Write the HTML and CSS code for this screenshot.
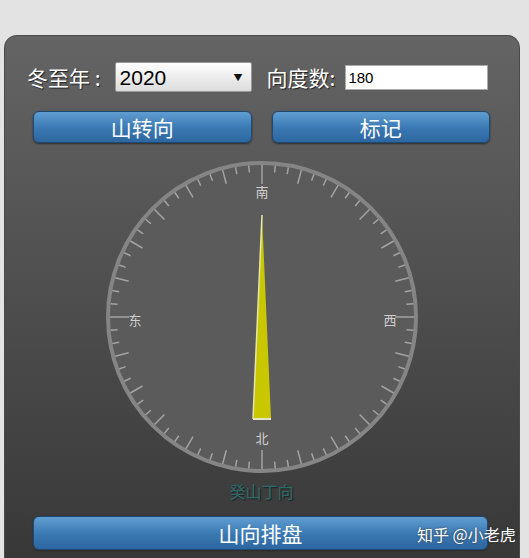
FILE: index.html
```html
<!DOCTYPE html>
<html lang="zh-CN">
<head>
  <meta charset="UTF-8" />
  <meta name="viewport" content="width=device-width, initial-scale=1.0"/>
  <title>山向排盘</title>
  <link rel="stylesheet" href="styles.css">
</head>
<body>
  <div class="panel">
    <div class="row">
      <label class="lbl" for="year">冬至年 :</label>
      <span class="select-wrap">
        <select id="year" class="year">
          <option>2020</option>
          <option>2021</option>
        </select>
      </span>
      <label class="lbl deg-lbl" for="deg">向度数:</label>
      <input type="text" id="deg" class="deg" value="180" />
    </div>

    <div class="btn-row">
      <button class="btn">山转向</button>
      <button class="btn">标记</button>
    </div>

    <div class="compass-box">
      <svg id="compass" width="320" height="320" viewBox="0 0 320 320">
        <circle cx="160" cy="160" r="154" fill="#5b5b5b" stroke="#858585" stroke-width="4"/>
        <g id="ticks" stroke="#a3a3a3" stroke-width="1.5"></g>
        <g class="dir">
          <text x="160" y="40">南</text>
          <text x="160" y="286">北</text>
          <text x="33" y="168">东</text>
          <text x="288" y="168">西</text>
        </g>
        <polygon points="160,58 151,262 169,262" fill="#c9c800"/>
        <line x1="160" y1="58" x2="151" y2="262" stroke="#e6e6a8" stroke-width="1.5"/>
        <line x1="151" y1="262" x2="169" y2="262" stroke="#e4e4c8" stroke-width="2"/>
      </svg>
    </div>

    <div class="result">癸山丁向</div>

    <div class="bottom">
      <button class="btn big">山向排盘</button>
    </div>
  </div>

  <div class="mark">知乎 @小老虎</div>

  <script>
    // draw the 72 ticks, one every 5 degrees
    const ticks = document.getElementById("ticks");
    for (let i = 0; i < 72; i++) {
      const deg = i * 5;
      let len = 7;
      if (deg % 90 === 0) len = 19;
      else if (deg % 15 === 0) len = 14;
      const a = deg * Math.PI / 180;
      const r1 = 152, r2 = 152 - len;
      const line = document.createElementNS("http://www.w3.org/2000/svg", "line");
      line.setAttribute("x1", 160 + r1 * Math.sin(a));
      line.setAttribute("y1", 160 - r1 * Math.cos(a));
      line.setAttribute("x2", 160 + r2 * Math.sin(a));
      line.setAttribute("y2", 160 - r2 * Math.cos(a));
      ticks.appendChild(line);
    }
  </script>
</body>
</html>
```

FILE: styles.css
```css
body {
  margin: 0;
  background: #e3e3e3;
  font-family: "Noto Sans CJK SC", "Noto Sans", sans-serif;
  overflow: hidden;
}

.panel {
  margin: 35px 0 0 4px;
  width: 516px;
  height: 523px;
  box-sizing: border-box;
  border: 1px solid #4a4a4a;
  border-bottom: none;
  border-radius: 13px 13px 0 0;
  background: linear-gradient(#646464, #4e4e4e 50%, #383838);
  padding: 25px 29px 0 22px;
}

.row {
  display: flex;
  align-items: center;
  height: 32px;
}

.lbl {
  color: #fff;
  font-size: 21px;
  line-height: 1;
  text-shadow: 1px 1px 1px #222;
}

.select-wrap {
  position: relative;
  margin-left: 14px;
}

.select-wrap::after {
  content: "▼";
  position: absolute;
  right: 9px;
  top: 9px;
  font-size: 9px;
  color: #111;
}

.year {
  appearance: none;
  width: 137px;
  height: 30px;
  border: 1px solid #999;
  border-radius: 2px;
  background: linear-gradient(#ffffff, #dcdcdc);
  font-family: "Liberation Sans", sans-serif;
  font-size: 21px;
  padding: 0 0 0 4px;
  color: #000;
}

.deg-lbl {
  margin-left: 15px;
}

.deg {
  width: 143px;
  height: 25px;
  box-sizing: border-box;
  margin-left: 10px;
  border: 1px solid #aaa;
  padding: 0 2px;
  font-family: "Liberation Sans", sans-serif;
  font-size: 15px;
  color: #000;
}

.btn-row {
  display: flex;
  gap: 20px;
  margin: 18px 0 0 6px;
}

.btn {
  flex: 1;
  height: 32px;
  border: 1px solid #1f4a73;
  border-radius: 6px;
  background: linear-gradient(#5f9dd1, #3a78b2 55%, #2d66a0);
  color: #fff;
  font-family: "Noto Sans CJK SC", sans-serif;
  font-size: 21px;
  line-height: 1;
  box-shadow: 0 1px 2px #2a2a2a;
  cursor: pointer;
}

.compass-box {
  display: flex;
  justify-content: center;
  margin: 14px 0 0 6px;
  height: 320px;
}

.dir text {
  fill: #cfcfcf;
  font-size: 13px;
  text-anchor: middle;
  font-family: "Noto Sans CJK SC", sans-serif;
}

.result {
  text-align: center;
  margin: 5px 0 0 6px;
  color: #2a6c6c;
  font-size: 16px;
  line-height: 18px;
  text-shadow: 1px 1px 1px #222;
}

.bottom {
  display: flex;
  margin: 16px 2px 0 6px;
}

.btn.big {
  height: 34px;
  font-size: 21px;
}

.mark {
  position: absolute;
  left: 417px;
  top: 522px;
  color: #fff;
  font-size: 16px;
  font-family: "Noto Sans CJK SC", sans-serif;
  text-shadow: 0 0 2px #333;
}
```
